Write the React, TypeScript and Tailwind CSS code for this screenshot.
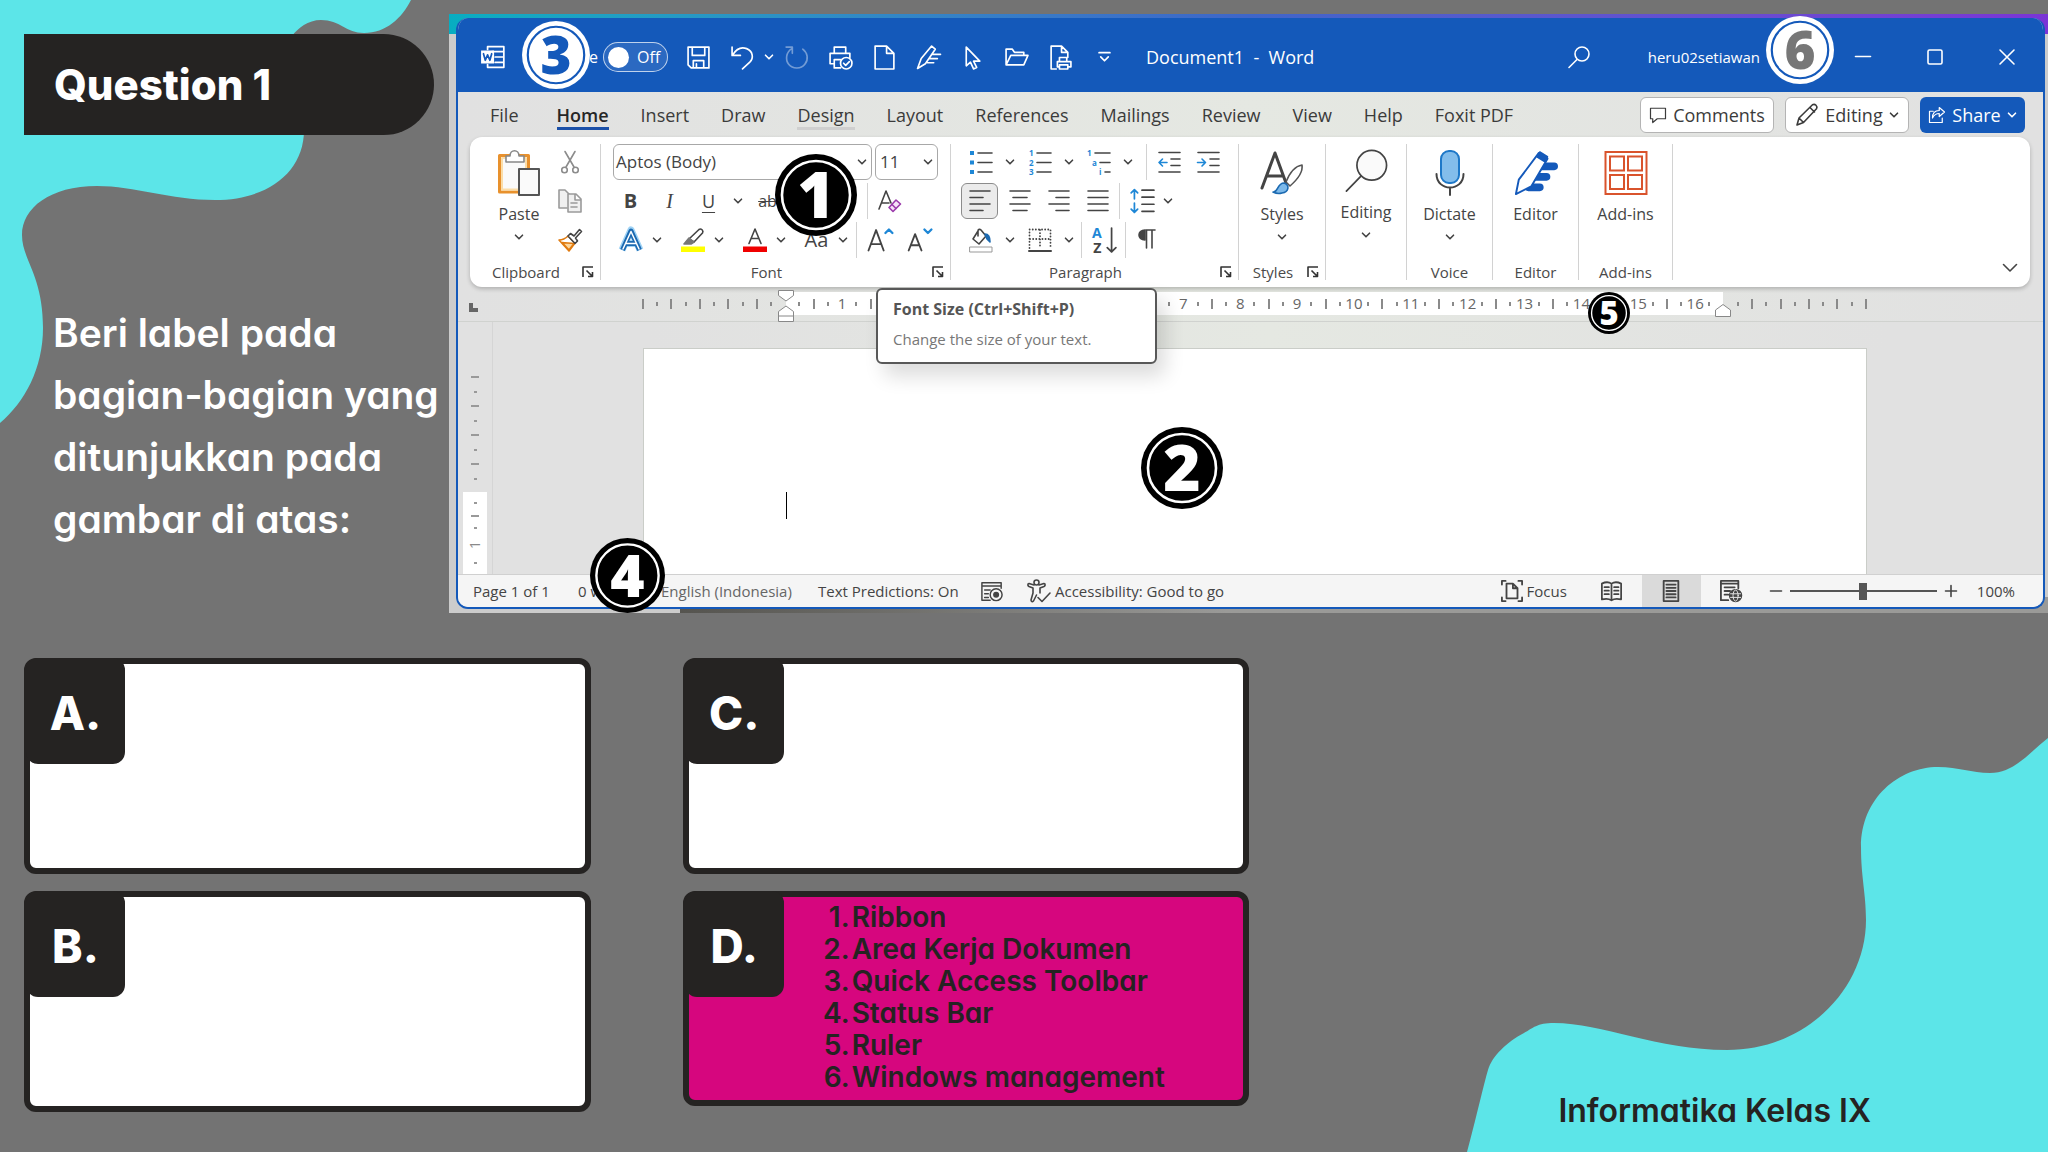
import type { ReactNode } from 'react';
import clsx from 'clsx';

const HAND = "font-['Inter',sans-serif] [font-feature-settings:'cv11','ss03']";

const tabs = [
  'File',
  'Home',
  'Insert',
  'Draw',
  'Design',
  'Layout',
  'References',
  'Mailings',
  'Review',
  'View',
  'Help',
  'Foxit PDF',
];

const answers = ['Ribbon', 'Area Kerja Dokumen', 'Quick Access Toolbar', 'Status Bar', 'Ruler', 'Windows management'];

interface IconProps {
  className?: string;
  box?: string;
  children: ReactNode;
}

function Icon({ className = 'size-6', box = '0 0 24 24', children }: IconProps) {
  return (
    <svg
      viewBox={box}
      className={clsx('shrink-0 overflow-visible', className)}
      fill="none"
      stroke="currentColor"
      strokeWidth="1.6"
      strokeLinecap="round"
      strokeLinejoin="round"
      aria-hidden="true"
    >
      {children}
    </svg>
  );
}

function Chevron({ className = 'size-2.5' }: { className?: string }) {
  return (
    <Icon box="0 0 10 10" className={className}>
      <path d="M1.5 3.2 5 6.8 8.5 3.2" />
    </Icon>
  );
}

/* ---------- slide parts ---------- */

function Blobs() {
  return (
    <>
      <svg className="absolute left-0 top-0 h-[430px] w-[420px]" viewBox="0 0 420 430" aria-hidden="true">
        <path
          fill="#5ce5e8"
          d="M0 0H411C402 18 386 33 364 33C346 33 340 20 321 20C308 20 298 28 292 36L304 130C304 172 268 200 215 200C170 200 135 186 97 186C50 186 22 208 22 235C22 260 43 275 43 328C43 368 25 402 0 423Z"
        />
      </svg>
      <svg className="absolute bottom-0 right-0 h-[414px] w-[581px]" viewBox="0 0 581 414" aria-hidden="true">
        <path
          fill="#5ce5e8"
          d="M581 0C562 15 547 35 523 35C504 35 492 29 471 29C432 29 394 60 394 109C394 140 399 155 399 182C399 250 340 312 260 312C190 312 135 285 87 285C70 285 66 290 57 295C40 304 25 318 21 332C17 345 8 385 0 414H581Z"
        />
      </svg>
    </>
  );
}

interface BadgeProps {
  n: number;
  className: string;
  disc?: string;
  ink?: string;
}

function Badge({ n, className, disc = '#000', ink = '#fff' }: BadgeProps) {
  return (
    <svg viewBox="0 0 100 100" className={clsx('absolute z-20 overflow-visible', className)}>
      <defs>
        <linearGradient id="avatar" x1="0" y1="0" x2="0.35" y2="1">
          <stop offset="0.32" stopColor="#1459ba" />
          <stop offset="0.36" stopColor="#777" />
        </linearGradient>
      </defs>
      <circle cx="50" cy="50" r="50" fill={disc} />
      <circle cx="50" cy="50" r="41.5" fill="none" stroke={disc === '#000' ? '#fff' : '#1459ba'} strokeWidth="3.2" />
      <text
        x="50"
        y="78"
        textAnchor="middle"
        fontSize="78"
        fontWeight="800"
        fill={ink}
        className="font-['Open_Sans',sans-serif]"
      >
        {n}
      </text>
    </svg>
  );
}

interface CardProps {
  letter: string;
  className: string;
  children?: ReactNode;
}

function Card({ letter, className, children }: CardProps) {
  return (
    <div className={clsx('flex rounded-xl border-6 border-[#252322]', className)}>
      <div className="-mt-1.5 -ml-1 flex h-[106px] w-[99px] shrink-0 items-center justify-center rounded-xl bg-[#252322] pt-1">
        <span className={clsx(HAND, 'text-[46px] font-extrabold text-white')}>{letter}.</span>
      </div>
      {children}
    </div>
  );
}

/* ---------- title bar ---------- */

function TitleBar() {
  return (
    <div className="flex h-[74px] items-center bg-[#1459ba] pt-1 text-[17px] text-white">
      <div className="flex w-[70px] justify-center">
        <Icon className="size-[26px]">
          <path d="M7 5V2.5h15v19H7V19M11 7h11M14 12h8M14 17h8" />
          <rect x="1" y="6" width="12" height="12" fill="#fff" stroke="none" />
          <path d="m3.2 9 1.7 6L7 10l2.100 5L10.800 9" stroke="#1459ba" />
        </Icon>
      </div>
      <span className="w-[67px] text-right text-base">AutoSave</span>
      <button className="ml-2 flex h-[30px] w-[65px] items-center gap-2 rounded-full border border-white/70 bg-white/10 pl-1 text-base">
        <span className="size-[21px] rounded-full bg-white" />
        Off
      </button>
      <div className="ml-2 flex items-center [&>button]:flex [&>button]:w-11 [&>button]:justify-center">
        <button aria-label="Save">
          <Icon className="size-[25px]">
            <path d="M2 2h20v20H5l-3-3zM6 2v8h12V2M7 22v-7h10v7M10 22v-4" />
          </Icon>
        </button>
        <button aria-label="Undo">
          <Icon className="size-[25px]">
            <path d="M2 2v8h8M2.500 9.500C6 4 11 1.500 16 3.500c6 2.500 7 9 3 13L12 23" />
          </Icon>
        </button>
        <Chevron />
        <button aria-label="Redo" className="opacity-40">
          <Icon className="size-[25px]">
            <path d="M2 2h6v6M7.500 3.500C2 7 1 14 4.500 18.500c4 5 12 4.500 15.500 0 4-5 2.500-11-2-14.500" />
          </Icon>
        </button>
        <button aria-label="Print preview">
          <Icon className="size-[25px]">
            <path d="M6 8V2h11v6M6 18H2V8h19v4M12 22H6v-8h6" />
            <circle cx="17.500" cy="17.500" r="5.500" />
            <path d="m15 17.500 2 2 3.500-3.500" />
          </Icon>
        </button>
        <button aria-label="New">
          <Icon className="size-[25px]">
            <path d="M3 1h11l7 7v15H3zM14 1v7h7" />
          </Icon>
        </button>
        <button aria-label="Editor">
          <Icon className="size-[25px]">
            <path d="M15 1 5 13 1.500 22.500 9 18 18.500 4zM16 9h7.500M13.500 13h7M11 17h6" />
          </Icon>
        </button>
        <button aria-label="Select">
          <Icon className="size-[25px]">
            <path d="M6 2v18l4-3.500 3 6.500 3-1.500-3-6h6z" />
          </Icon>
        </button>
        <button aria-label="Open">
          <Icon className="size-[25px]">
            <path d="M2 19V4h6l2 3h9v3M2 19l4.500-9H23l-4 9z" />
          </Icon>
        </button>
        <button aria-label="Quick print">
          <Icon className="size-[25px]">
            <path d="M8 23H3V1h10l6 6v5M13 1v6h6M11 16v-4h7v4M11 21H9v-5h13v5h-2M11 19h8v4h-8z" />
          </Icon>
        </button>
        <button aria-label="Customize toolbar">
          <Icon className="size-[13px]" box="0 0 12 12">
            <path d="M1 1.500h10M2.500 5.500 6 9l3.500-3.500" />
          </Icon>
        </button>
      </div>
      <span className="ml-5 whitespace-pre text-lg">Document1  -  Word</span>
      <div className="ml-auto flex items-center">
        <button aria-label="Search" className="mr-[57px]">
          <Icon>
            <circle cx="15" cy="9" r="7" />
            <path d="M10 14.500 2 22.500" />
          </Icon>
        </button>
        <span className="mr-[67px] text-[15px]">heru02setiawan</span>
        <button aria-label="Minimize" className="flex w-[72px] justify-center">
          <Icon className="size-4" box="0 0 16 16">
            <path d="M0.500 7.500h15" />
          </Icon>
        </button>
        <button aria-label="Maximize" className="flex w-[72px] justify-center">
          <Icon className="size-4" box="0 0 16 16">
            <rect x="1" y="1" width="14" height="14" rx="1.500" />
          </Icon>
        </button>
        <button aria-label="Close" className="flex w-[72px] justify-center">
          <Icon className="size-4" box="0 0 16 16">
            <path d="m1 1 14 14M15 1 1 15" />
          </Icon>
        </button>
      </div>
    </div>
  );
}

function TabRow() {
  return (
    <div className="flex h-[45px] items-center pl-8 pr-[18px] text-lg text-[#3b3b3b]">
      <nav className="flex gap-8">
        {tabs.map((tab) => (
          <button
            key={tab}
            className={clsx(
              'border-b-3 pt-1 leading-6',
              tab === 'File' && 'mr-1.5',
              tab === 'Home' && 'border-[#1b50a8] font-semibold text-[#262626]',
              tab === 'Design' && 'border-[#cfcfcf]',
              tab !== 'Home' && tab !== 'Design' && 'border-transparent',
            )}
          >
            {tab}
          </button>
        ))}
      </nav>
      <div className="ml-auto flex gap-[11px]">
        <button className="flex h-9 w-[134px] items-center justify-center gap-1.5 rounded-md border border-[#b4b4b4] bg-white">
          <Icon className="size-[18px]">
            <path d="M2 3h20v14H11l-6 5v-5H2z" />
          </Icon>
          Comments
        </button>
        <button className="flex h-9 w-[124px] items-center justify-center gap-1.5 rounded-md border border-[#b4b4b4] bg-white">
          <Icon>
            <path d="m2 22 2-7L17.500 1.800c2.500-1.500 5.500 1.500 4 4L8.500 19.500zM15 4.500 19.500 9M4 15l4.500 4.500" />
          </Icon>
          Editing
          <Chevron />
        </button>
        <button className="flex h-9 w-[105px] items-center justify-center gap-1.5 rounded-md bg-[#1459ba] text-white">
          <Icon className="size-[18px]">
            <path d="M7 7H2v15h17v-6M15 2l7 6-7 6v-4c-5 0-7 2-9 6 0-6 3-10 9-10z" />
          </Icon>
          Share
          <Chevron />
        </button>
      </div>
    </div>
  );
}

/* ---------- ribbon ---------- */

interface GroupProps {
  label?: string;
  launcher?: boolean;
  className: string;
  children: ReactNode;
}

function Group({ label, launcher, className, children }: GroupProps) {
  return (
    <div className={clsx('flex h-[136px] shrink-0 flex-col border-r border-[#d2d2d2]', className)}>
      <div className="flex-1">{children}</div>
      <div className={clsx('flex h-4 items-center text-[15px] leading-4 text-[#4a4a4a]', launcher && 'pr-1.5')}>
        <span className="flex-1 text-center">{label}</span>
        {launcher && (
          <button aria-label={`${label} settings`}>
            <Icon box="0 0 12 12" className="size-3">
              <path d="M1 11V1h10M4.500 4.500l6 6M10.500 6v4.500H6" stroke="#333" strokeLinecap="butt" />
            </Icon>
          </button>
        )}
      </div>
    </div>
  );
}

interface BigButtonProps {
  label: string;
  icon: ReactNode;
  menu?: boolean;
}

function BigButton({ label, icon, menu }: BigButtonProps) {
  return (
    <button className="flex w-full flex-col items-center pt-1.5">
      {icon}
      <span className="mt-2 text-base leading-5">{label}</span>
      {menu && <Chevron className="mt-2 size-2.5" />}
    </button>
  );
}

function Cell({ label, children }: { label: string; children: ReactNode }) {
  return (
    <button aria-label={label} className="flex h-9 w-[39px] shrink-0 items-center justify-center">
      {children}
    </button>
  );
}

function Menu({ className = 'w-5' }: { className?: string }) {
  return (
    <button aria-label="More options" className={clsx('flex shrink-0 justify-center', className)}>
      <Chevron />
    </button>
  );
}

function Rule() {
  return <div className="mx-0.5 h-9 w-px shrink-0 bg-[#d2d2d2]" />;
}

function ClipboardGroup() {
  return (
    <Group label="Clipboard" launcher className="w-[131px]">
      <div className="flex pl-2">
        <div className="w-[82px]">
          <BigButton
            label="Paste"
            menu
            icon={
              <Icon box="0 0 42 46" className="h-[46px] w-[42px]">
                <path d="M1.500 5.500h29V42h-29z" stroke="#e8912d" strokeWidth="3" fill="#fff" />
                <path d="M4 8h24v31.500H4z" stroke="#fbdda8" strokeWidth="2" fill="#fafafa" />
                <path d="M8 12V6h4c0-7 9-7 9 0h5v6z" fill="#fff" stroke="#888" />
                <path d="M21 19h20v26H21z" fill="#fafafa" stroke="#555" strokeWidth="2" />
              </Icon>
            }
          />
        </div>
        <div className="flex flex-col gap-[3px] [&>button]:w-5">
          <Cell label="Cut">
            <Icon className="size-6 text-[#8c8c8c]">
              <path d="M7 1.500 16 17M17 1.500 8 17" />
              <circle cx="6.500" cy="20" r="2.800" />
              <circle cx="17.500" cy="20" r="2.800" />
            </Icon>
          </Cell>
          <Cell label="Copy">
            <Icon className="size-6 text-[#9a9a9a]">
              <path d="M9 19H1V1h6l4 4" fill="#f0f0f0" />
              <path d="M10 5h8l5 5v13H10zM17 5v6h6M13 14h6M13 18h6" fill="#f0f0f0" />
            </Icon>
          </Cell>
          <Cell label="Format Painter">
            <Icon className="size-6">
              <path d="M1 12c4 0 7-2 9-4l7 7-6 8z" stroke="#e07b10" fill="#fff" />
              <path d="M4 14.500c5 1 7 0 12 1L11 22z" stroke="#e07b10" fill="#fdd69b" />
              <path d="m10 8 2.500-2.500L16 8l5.500-6.500 2 2L17.500 10l2 3-2.500 2.500z" stroke="#444" fill="#fff" />
            </Icon>
          </Cell>
        </div>
      </div>
    </Group>
  );
}

function FontGroup() {
  return (
    <Group label="Font" launcher className="w-[350px]">
      <div className="flex h-9 gap-[9px] pl-3">
        <button
          aria-label="Font name"
          className="flex w-[259px] items-center justify-between rounded-md border border-[#a8a8a8] px-1 pl-0.5 text-[17px]"
        >
          Aptos (Body)
          <Chevron />
        </button>
        <button
          aria-label="Font size"
          className="-ml-1.5 flex w-[63px] items-center justify-between rounded-md border border-[#a8a8a8] px-1 text-[17px]"
        >
          11
          <Chevron />
        </button>
      </div>
      <div className="mt-[3px] flex items-center pl-2.5">
        <Cell label="Bold">
          <span className="text-xl font-bold">B</span>
        </Cell>
        <Cell label="Italic">
          <span className="font-['Liberation_Serif',serif] text-xl italic">I</span>
        </Cell>
        <Cell label="Underline">
          <span className="text-lg underline underline-offset-4">U</span>
        </Cell>
        <Menu />
        <Cell label="Strikethrough">
          <span className="text-base line-through">ab</span>
        </Cell>
        <Cell label="Subscript">
          <span className="text-lg">
            x<sub className="text-[11px] text-[#1e87d6]">2</sub>
          </span>
        </Cell>
        <Cell label="Superscript">
          <span className="text-lg">
            x<sup className="text-[11px] text-[#1e87d6]">2</sup>
          </span>
        </Cell>
        <Rule />
        <Cell label="Clear formatting">
          <Icon className="size-6">
            <path d="M1 20 8 2l5 12M4 14h7" />
            <path d="m11 18.500 7-7.500 4.500 4L15 22.500z" stroke="#9b3bab" fill="#f6e3f8" />
            <path d="m14 15.500 4 4" stroke="#9b3bab" />
          </Icon>
        </Cell>
      </div>
      <div className="mt-[3px] flex items-center pl-2.5">
        <Cell label="Text effects">
          <Icon className="size-6">
            <path d="M3 22 12 2l9 20M6.500 15.500h11" stroke="#9fd3f5" strokeWidth="7" strokeLinecap="butt" />
            <path d="M3.500 22 12 3l8.500 19M7 15.500h10" stroke="#1c6ab1" strokeWidth="5" strokeLinecap="butt" />
            <path d="M4 21 12 3.500l8 17.500M7 15.500h10" stroke="#fff" strokeWidth="1.500" />
          </Icon>
        </Cell>
        <Menu className="mr-[9px] w-3.5" />
        <Cell label="Highlight">
          <Icon className="size-6">
            <path d="M0 18.500h24v5.500H0z" fill="#ff0" stroke="none" />
            <path d="M8 11 18 1.500c2-1.500 5 1 3.500 3.500L13 14z" fill="#fff" />
            <path d="M8 10 3 16h7l3-2z" fill="#777" stroke="#777" />
          </Icon>
        </Cell>
        <Menu className="mr-[9px] w-3.5" />
        <Cell label="Font color">
          <Icon className="size-6">
            <path d="M0 18.500h24v5.500H0z" fill="#f00000" stroke="none" />
            <path d="M6 15.500 12 1l6 14.500M8 10.500h8" />
          </Icon>
        </Cell>
        <Menu className="mr-[9px] w-3.5" />
        <Cell label="Change case">
          <span className="text-xl">Aa</span>
        </Cell>
        <Menu className="mr-1 w-3.5" />
        <Rule />
        <Cell label="Grow font">
          <Icon className="size-7">
            <path d="M3 21 9.500 3.500 16 21M5.500 15.500h8" />
            <path d="m17.500 6 3-3 3 3" stroke="#1e87d6" strokeWidth="2" />
          </Icon>
        </Cell>
        <Cell label="Shrink font">
          <Icon className="size-7">
            <path d="M4 21l5.500-14L15 21M6 16.500h7" />
            <path d="m17.500 3 3 3 3-3" stroke="#1e87d6" strokeWidth="2" />
          </Icon>
        </Cell>
      </div>
    </Group>
  );
}

function ParagraphGroup() {
  return (
    <Group label="Paragraph" launcher className="w-[288px]">
      <div className="flex items-center pl-2.5">
        <Cell label="Bullets">
          <Icon className="size-6">
            <path d="M9 3h14M9 12.500h14M9 22h14" />
            <path d="M1 1h4v4H1zM1 10.500h4v4H1zM1 20h4v4H1z" fill="#1e87d6" stroke="none" />
          </Icon>
        </Cell>
        <Menu />
        <Cell label="Numbering">
          <Icon className="size-6">
            <path d="M9 3h14M9 12.500h14M9 22h14" />
            <g className="fill-[#1e87d6] stroke-none text-[8px] font-bold">
              <text x="1" y="6">1</text>
              <text x="1" y="15.500">2</text>
              <text x="1" y="25">3</text>
            </g>
          </Icon>
        </Cell>
        <Menu />
        <Cell label="Multilevel list">
          <Icon className="size-6">
            <path d="M8 3h15M13 12.500h10M18 22h5" />
            <g className="fill-[#1e87d6] stroke-none text-[8px] font-bold">
              <text x="0" y="6">1</text>
              <text x="5" y="15.500">a</text>
              <text x="12" y="25">i</text>
            </g>
          </Icon>
        </Cell>
        <Menu className="mr-1.5 w-5" />
        <Rule />
        <Cell label="Decrease indent">
          <Icon className="size-6">
            <path d="M2 2.500h21M14 9h9M14 15.500h9M2 22h21" />
            <path d="M2 12.500h8M5.500 9 2 12.500 5.500 16" stroke="#1e87d6" />
          </Icon>
        </Cell>
        <Cell label="Increase indent">
          <Icon className="size-6">
            <path d="M2 2.500h21M14 9h9M14 15.500h9M2 22h21" />
            <path d="M1.500 12.500h8M6 9l3.500 3.500L6 16" stroke="#1e87d6" />
          </Icon>
        </Cell>
      </div>
      <div className="mt-[3px] flex items-center pl-2.5">
        <div className="mr-0.5 rounded-md border border-[#8c8c8c] bg-[#ebebeb] [&>button]:h-[34px] [&>button]:w-[35px]">
          <Cell label="Align left">
            <Icon className="size-6">
              <path d="M2 2h20M2 8.500h13M2 15h20M2 21.500h13" />
            </Icon>
          </Cell>
        </div>
        <Cell label="Center">
          <Icon className="size-6">
            <path d="M2 2h20M5 8.500h14M2 15h20M5 21.500h14" />
          </Icon>
        </Cell>
        <Cell label="Align right">
          <Icon className="size-6">
            <path d="M2 2h20M9 8.500h13M2 15h20M9 21.500h13" />
          </Icon>
        </Cell>
        <Cell label="Justify">
          <Icon className="size-6">
            <path d="M2 2h20M2 8.500h20M2 15h20M2 21.500h20" />
          </Icon>
        </Cell>
        <Rule />
        <Cell label="Line spacing">
          <Icon className="size-[26px]">
            <path d="M12 2h11M12 8.500h11M12 15h11M12 21.500h11" />
            <path d="M5 1.500V10M2 4.500l3-3 3 3M5 14v8.500M2 19.500l3 3 3-3" stroke="#1e87d6" />
          </Icon>
        </Cell>
        <Menu className="w-3.5" />
      </div>
      <div className="mt-[3px] flex items-center pl-2.5">
        <Cell label="Shading">
          <Icon className="size-6">
            <path d="M1 19h22v5H1z" stroke="#999" strokeWidth="1" />
            <path d="M9 3 4 11l6 5 7-8-5-6c-1-1-3-1-3 1v5" />
            <path d="M16 6c4 0 5 3 5 8l-3-3z" fill="#1c6ab1" stroke="#1c6ab1" />
          </Icon>
        </Cell>
        <Menu />
        <Cell label="Borders">
          <Icon className="size-6">
            <path d="M1.500 20V1.500h21V20M12 2v18M2 11h20" strokeDasharray="0.100 3" strokeWidth="1.800" />
            <path d="M1 23h22" strokeWidth="2" />
          </Icon>
        </Cell>
        <Menu />
        <Rule />
        <Cell label="Sort">
          <Icon className="size-[26px]">
            <g className="stroke-none text-[13px] font-bold">
              <text x="1" y="10" fill="#1e87d6">A</text>
              <text x="2" y="24" fill="#444">Z</text>
            </g>
            <path d="M19 1v22M15 19l4 4 4-4" />
          </Icon>
        </Cell>
        <Rule />
        <Cell label="Show marks">
          <Icon className="size-6">
            <path d="M9 12C1 12 1 2 9 2z" fill="currentColor" />
            <path d="M10 2h9M10.500 2v18M16 2v18" />
          </Icon>
        </Cell>
      </div>
    </Group>
  );
}

function Ribbon() {
  return (
    <div className="ml-3 mr-[13px] flex rounded-xl bg-white py-[7px] text-[#444] shadow-[0_2px_4px_rgba(0,0,0,0.22)]">
      <ClipboardGroup />
      <FontGroup />
      <ParagraphGroup />
      <Group label="Styles" launcher className="w-[87px]">
        <BigButton
          label="Styles"
          menu
          icon={
            <Icon box="0 0 44 46" className="h-[46px] w-11">
              <path d="M2 38 15 3l11 30M7 26h16" strokeWidth="3" />
              <path d="M26 32C30 22 36 16 42 15c1 6-4 14-12 21z" fill="#fff" stroke="#555" />
              <path d="M13 42c5 1 4-9 11-9 6 2 5 9-2 10-3 1-7 0-9-1z" fill="#7cb9ea" stroke="#1c6ab1" />
            </Icon>
          }
        />
      </Group>
      <Group className="w-[81px]">
        <BigButton
          label="Editing"
          menu
          icon={
            <Icon box="0 0 44 46" className="h-11 w-11">
              <circle cx="28" cy="16" r="15.500" fill="#fafafa" strokeWidth="1.800" />
              <path d="M17 27 1.500 43" strokeWidth="1.800" />
            </Icon>
          }
        />
      </Group>
      <Group label="Voice" className="w-[86px]">
        <BigButton
          label="Dictate"
          menu
          icon={
            <Icon box="0 0 44 46" className="h-[46px] w-11">
              <rect x="13" y="1" width="18" height="32" rx="8" fill="#83bdeb" stroke="#1e78c8" strokeWidth="2" />
              <path d="M8.500 24c0 18 27 18 27 0M22 38v7" strokeWidth="2" />
            </Icon>
          }
        />
      </Group>
      <Group label="Editor" className="w-[86px]">
        <BigButton
          label="Editor"
          icon={
            <Icon box="0 0 46 48" className="h-[46px] w-11">
              <path d="M25 17h17M20 28h14M15 39h12" stroke="#1459ba" strokeWidth="8" />
              <path d="M2 46 5 31 26 3l9 6-17 29z" fill="#fff" stroke="#1459ba" strokeWidth="2" />
              <path d="m27 2 8 5-3 5-8-5z" fill="#1459ba" stroke="#1459ba" />
            </Icon>
          }
        />
      </Group>
      <Group label="Add-ins" className="w-[94px]">
        <BigButton
          label="Add-ins"
          icon={
            <Icon box="0 0 44 46" className="h-[46px] w-11">
              <path
                d="M1.500 2h41v42h-41zM6 6.500h14v14H6zM24 6.500h14v14H24zM6 25h14v14H6zM24 25h14v14H24z"
                stroke="#d9532c"
                strokeWidth="2"
                strokeLinejoin="miter"
              />
            </Icon>
          }
        />
      </Group>
      <button aria-label="Collapse ribbon" className="ml-auto mr-3 mb-1 self-end">
        <Icon className="size-4" box="0 0 16 16">
          <path d="M1.500 4.500 8 11l6.500-6.500" />
        </Icon>
      </button>
    </div>
  );
}

/* ---------- document ---------- */

const LEFT_QUARTERS = 10;
const rulerTicks = Array.from({ length: 87 }, (_, i) => i - LEFT_QUARTERS);

function tickFor(q: number) {
  if (q === 0 || q === 66) return null;
  if (q > 0 && q < 66 && q % 4 === 0) return <span>{q / 4}</span>;
  return <span className={clsx('w-0.5 shrink-0 bg-[#8a8a8a]', q % 2 === 0 ? 'h-2.5' : 'h-1')} />;
}

function Ruler() {
  return (
    <div className="flex h-[35px] border-b border-[#d0d2cf] pt-[5px]">
      <div className="w-[185px] shrink-0 pl-[11px] pt-[11px]">
        <div className="size-[9px] border-b-4 border-l-4 border-[#666]" />
      </div>
      <div className="relative mr-[176px] flex-1">
        <div className="absolute left-[11.7%] right-[11.8%] top-0 h-[23px] bg-white" />
        <div className="relative flex h-[23px] items-center justify-between text-[15px] text-[#666]">
          {rulerTicks.map((q) => (
            <div key={q} className="flex w-0 items-center justify-center">
              {tickFor(q)}
            </div>
          ))}
        </div>
        <svg className="absolute left-[11.7%] -top-0.5 -ml-2 h-8 w-4" viewBox="0 0 16 32" fill="#fff" stroke="#888">
          <path d="M.5.5h15v5L8 11 .5 5.500zM8 16l7.500 5.500v10H.5v-10zM.5 26h15" />
        </svg>
        <svg className="absolute right-[11.8%] top-3 -mr-2 h-[13px] w-4" viewBox="0 0 16 13" fill="#fff" stroke="#888">
          <path d="M8 .5 15.500 6v6.500H.5V6z" />
        </svg>
      </div>
    </div>
  );
}

function VerticalRuler() {
  return (
    <div className="flex w-[35px] shrink-0 flex-col items-center border-r border-[#d5d5d5] pt-[42px] text-[#8a8a8a]">
      <div className="flex h-[128px] flex-col justify-evenly">
        {[0, 1, 2, 3, 4, 5, 6, 7].map((i) => (
          <span key={i} className={clsx('h-0.5 self-center bg-[#999]', i % 2 ? 'w-[3px]' : 'w-2')} />
        ))}
      </div>
      <div className="flex w-6 flex-1 flex-col items-center justify-evenly bg-white">
        <span className="h-0.5 w-[3px] bg-[#999]" />
        <span className="h-0.5 w-2 bg-[#999]" />
        <span className="h-0.5 w-[3px] bg-[#999]" />
        <span className="-rotate-90 text-sm leading-3">1</span>
        <span className="h-0.5 w-[3px] bg-[#999]" />
      </div>
    </div>
  );
}

function StatusBar() {
  return (
    <div className="flex h-[33px] shrink-0 items-center border-t border-[#d0d0d0] bg-[#f5f5f5] pl-[15px] pr-7 text-[15px] text-[#444]">
      <span className="w-[105px]">Page 1 of 1</span>
      <span className="w-[83px]">0 words</span>
      <span className="w-[157px] text-[#666]">English (Indonesia)</span>
      <span className="w-[163px]">Text Predictions: On</span>
      <Icon className="mr-6 size-[22px]">
        <path d="M22 9V3H1v19h9M1 6.500h21M4 11h6M4 15h4M4 19h4" />
        <circle cx="16.500" cy="16" r="6.500" />
        <circle cx="16.500" cy="16" r="2.500" fill="currentColor" />
      </Icon>
      <Icon className="mr-1 size-6">
        <circle cx="9.500" cy="3.500" r="2.500" />
        <path d="M7 6 2 4.500C0 5 1 7 2 7.500l4 1.500v5l-2 7c0 2 2 2 2.500 1L9.500 16M12 6l5-1.500c2 .5 1 2.500 0 3L13 9v5M11 18.500l4 4 8-8.500" />
      </Icon>
      <span>Accessibility: Good to go</span>
      <button className="ml-auto flex items-center gap-1">
        <Icon className="size-[22px]">
          <path d="M5 1H1v4M19 1h4v4M1 19v4h4M23 19v4h-4M6 4h7l5 5v11H6zM13 4v5h5" strokeWidth="2" />
        </Icon>
        Focus
      </button>
      <button aria-label="Read mode" className="ml-[34px] mr-5">
        <Icon className="size-[21px]">
          <path
            d="M12 3c-3-2-7-2-11 0v18c4-1 8-1 11 1 3-2 7-2 11-1V3c-4-2-8-2-11 0zv19M4 7h5M4 11h5M4 15h5M15 7h5M15 11h5M15 15h5"
            strokeWidth="2"
          />
        </Icon>
      </button>
      <button aria-label="Print layout" className="flex h-8 w-[59px] items-center justify-center bg-[#dadada]">
        <Icon className="size-[22px]">
          <path d="M4 1h16v22H4zM7 5h10M7 8.500h10M7 12h10M7 15.500h10M7 19h10" strokeWidth="2" />
        </Icon>
      </button>
      <button aria-label="Web layout" className="ml-[19px]">
        <Icon className="size-[22px]">
          <path d="M20 9V1H1v21h8M1 4h19M5 8h11M5 12h6M5 16h4" strokeWidth="2" />
          <circle cx="17" cy="17" r="6.500" fill="#444" />
          <ellipse cx="17" cy="17" rx="2.800" ry="6" stroke="#eee" strokeWidth="1" />
          <path d="M11.500 15h11M11.500 19h11" stroke="#eee" strokeWidth="1" />
        </Icon>
      </button>
      <button aria-label="Zoom out" className="ml-7">
        <Icon className="size-3" box="0 0 12 12">
          <path d="M0.500 6h11" />
        </Icon>
      </button>
      <input
        type="range"
        aria-label="Zoom"
        defaultValue={50}
        className="mx-2 h-5 w-[147px] appearance-none bg-[linear-gradient(#555,#555)] bg-[length:100%_2px] bg-center bg-no-repeat [&::-webkit-slider-thumb]:h-[17px] [&::-webkit-slider-thumb]:w-2 [&::-webkit-slider-thumb]:appearance-none [&::-webkit-slider-thumb]:bg-[#555]"
      />
      <button aria-label="Zoom in" className="mr-5">
        <Icon className="size-3" box="0 0 12 12">
          <path d="M0.500 6h11M6 0.500v11" />
        </Icon>
      </button>
      <span>100%</span>
    </div>
  );
}

function WordWindow() {
  return (
    <div className="relative mt-3.5 h-[599px] min-w-0 flex-1 bg-[#cccccc] pb-1 pl-[7px] pr-[3px] pt-1">
      <div className="absolute inset-x-0 top-0 h-5 bg-linear-to-r from-[#07adc1] via-[#3f66c8] to-[#7a35d6]" />
      <div className="absolute bottom-0 left-[231px] right-0 h-4 bg-linear-to-r from-[#55544f] to-[#9a9a98] to-40%" />
      <div className="relative flex h-full flex-col overflow-hidden rounded-xl border-2 border-t-0 border-[#1459ba] bg-[#e1e1e1]">
        <TitleBar />
        <div className="bg-linear-to-r from-[#e1e1e1] via-[#e5e8e2] via-50% to-[#e1e1e1]">
          <TabRow />
          <Ribbon />
          <Ruler />
        </div>
        <div className="flex flex-1">
          <VerticalRuler />
          <div className="flex flex-1 bg-[linear-gradient(90deg,#e1e1e1_10%,#e5e8e2_50%,#e1e1e1_90%)] bg-[length:100%_27px] bg-no-repeat pl-[150px] pr-[176px] pt-[26px]">
            <div className="flex-1 border border-b-0 border-[#cacdc8] bg-white pl-[142px] pt-[143px]">
              <div className="h-[27px] w-px bg-black" />
            </div>
          </div>
        </div>
        <StatusBar />
      </div>

      <div
        role="tooltip"
        className="absolute left-[427px] top-[274px] z-10 flex h-[76px] w-[281px] flex-col gap-2 rounded-md border-2 border-[#585858] bg-white pl-[15px] pt-2 text-[15px] leading-[22px] shadow-[8px_12px_20px_rgba(0,0,0,0.14)]"
      >
        <span className="text-base leading-[22px] font-bold text-[#555]">Font Size (Ctrl+Shift+P)</span>
        <span className="text-[#777]">Change the size of your text.</span>
      </div>

      <Badge n={3} disc="#fff" ink="#1459ba" className="left-[73px] top-[7px] size-[68px]" />
      <Badge n={1} className="left-[326px] top-[140px] size-[82px]" />
      <Badge n={2} className="left-[692px] top-[413px] size-[82px]" />
      <Badge n={4} className="left-[141px] top-[524px] size-[75px]" />
      <Badge n={5} className="left-[1139px] top-[278px] size-[42px]" />
      <Badge n={6} disc="#fff" ink="url(#avatar)" className="right-[214px] top-[2px] size-[68px]" />
    </div>
  );
}

export default function App() {
  return (
    <main className="relative flex min-h-screen flex-col overflow-hidden bg-[#737373] font-['Open_Sans','Noto_Sans',sans-serif]">
      <Blobs />
      <div className="relative flex">
        <div className="w-[449px] shrink-0 pl-6 pt-[34px]">
          <h1
            className={clsx(
              HAND,
              'flex h-[101px] w-[410px] items-center rounded-r-full bg-[#252322] pl-[30px] text-[42px] font-extrabold text-white',
            )}
          >
            Question 1
          </h1>
          <p
            className={clsx(
              HAND,
              'mt-[167px] whitespace-nowrap pl-[29px] text-[39px] leading-[62px] font-semibold text-white',
            )}
          >
            Beri label pada
            <br />
            bagian-bagian yang
            <br />
            ditunjukkan pada
            <br />
            gambar di atas:
          </p>
        </div>
        <WordWindow />
      </div>

      <div className="relative mt-[45px] flex flex-1">
        <section className="grid w-[61%] grid-cols-2 content-start items-start gap-x-[92px] gap-y-[17px] pl-6">
          <Card letter="A" className="h-[216px] bg-white" />
          <Card letter="C" className="h-[216px] bg-white" />
          <Card letter="B" className="h-[221px] bg-white" />
          <Card letter="D" className="h-[215px] bg-[#d6067e]">
            <ol className={clsx(HAND, 'ml-8 pt-1 text-[28px] leading-8 font-semibold text-[#252322]')}>
              {answers.map((answer, i) => (
                <li key={answer} className="flex">
                  <span className="mr-0.5 w-[34px] text-right">{i + 1}.</span>
                  {answer}
                </li>
              ))}
            </ol>
          </Card>
        </section>
        <footer className="flex flex-1 items-end justify-end pr-[177px] pb-[21px]">
          <span className={clsx(HAND, 'text-[32px] leading-10 font-semibold text-[#252322]')}>Informatika Kelas IX</span>
        </footer>
      </div>
    </main>
  );
}
